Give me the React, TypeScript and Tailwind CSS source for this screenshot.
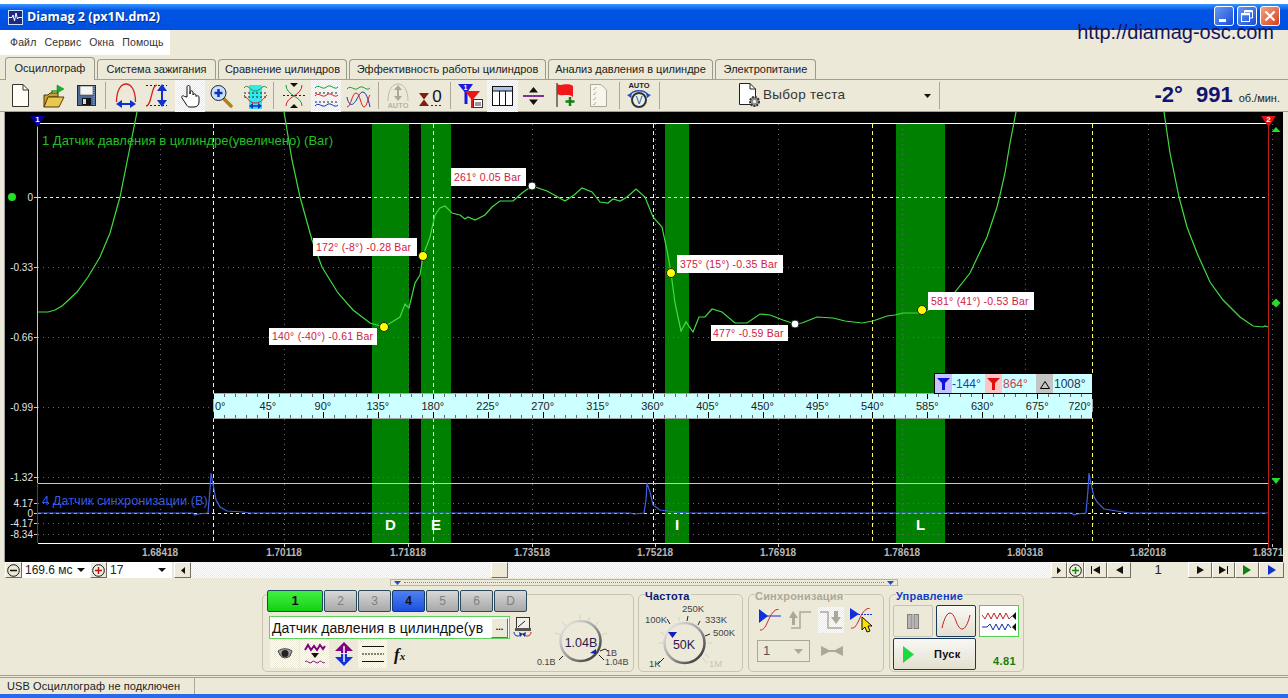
import type { ReactNode } from "react";

const pressure1 = "37.5,312 48,312 55,310 62,306 77,292 88,277 100,257 110,233 120,197 130,147 137,112";
const pressure2 =
  "284,112 292,160 300,197 312,240 322,267 338,293 353,310 370,323 384,327 392,322 400,317 405,304 409,308 415,283 420,275 423,256 430,237 435,215 440,208 445,206 452,213 460,215 465,219 468,217 475,220 485,215 492,207 500,201 513,201 522,193 532,186 547,191 556,196 565,201 574,195 582,188 592,192 600,202 608,203 613,199 620,201 627,197 636,189 645,197 653,217 662,227 667,250 671,273 675,303 681,331 686,322 693,332 699,317 705,317 712,309 722,312 735,323 747,323 760,314 770,315 783,320 795,324 802,323 817,317 833,318 845,321 862,323 873,321 887,316 895,315 903,313 922,313 933,308 955,292 970,273 987,237 997,207 1000,195 1005,173 1010,143 1016,112";
const pressure3 = "1164,112 1170,153 1179,197 1187,227 1197,253 1210,282 1223,300 1240,317 1253,326 1263,327 1265,326 1268,327";
const sync =
  "38,513 193,513 195,515 198,514 208,513 210,490 211,473 213,484 216,500 220,507 227,511 243,512 250,513 630,513 634,514 644,513 646,500 647,483 650,492 653,505 660,510 675,512 690,513 1072,513 1074,515 1077,514 1086,513 1088,490 1089,473 1091,484 1094,497 1097,502 1104,509 1123,512 1130,513 1268,513";

const bands = [
  { x: 372, w: 37, label: "D" },
  { x: 421, w: 30, label: "E" },
  { x: 665, w: 24, label: "I" },
  { x: 896, w: 49, label: "L" },
];
const gridX = [160, 284, 408, 532, 655, 778, 902, 1025, 1148, 1272];
const timeLabels = [
  [160, "1.68418"], [284, "1.70118"], [408, "1.71818"], [532, "1.73518"], [655, "1.75218"],
  [778, "1.76918"], [902, "1.78618"], [1025, "1.80318"], [1148, "1.82018"], [1268, "1.8371"],
] as const;
const yLabels = [
  [197, "0"], [267, "-0.33"], [337, "-0.66"], [407, "-0.99"], [477, "-1.32"],
  [503, "4.17"], [513, "0"], [523, "-4.17"], [534, "-8.34"],
] as const;
const notes = [
  { x: 269, y: 328, w: 108, h: 17, tx: 272, t: "140° (-40°) -0.61 Bar" },
  { x: 313, y: 238, w: 104, h: 18, tx: 316, t: "172° (-8°) -0.28 Bar" },
  { x: 451, y: 168, w: 75, h: 18, tx: 454, t: "261° 0.05 Bar" },
  { x: 677, y: 255, w: 106, h: 18, tx: 680, t: "375° (15°) -0.35 Bar" },
  { x: 711, y: 325, w: 77, h: 16, tx: 713, t: "477° -0.59 Bar" },
  { x: 928, y: 292, w: 106, h: 18, tx: 931, t: "581° (41°) -0.53 Bar" },
];
const degrees = [45, 90, 135, 180, 225, 270, 315, 360, 405, 450, 495, 540, 585, 630, 675];

function Scope() {
  const ticks: number[] = [];
  for (let i = 0; i <= 80; i++) ticks.push(213 + i * 10.99);
  return (
    <svg width="1278" height="450" viewBox="5 112 1278 450" className="block">
      <rect x="5" y="112" width="1278" height="450" fill="#000" />
      {bands.map((b) => (
        <rect key={b.x} x={b.x} y="124" width={b.w} height="419" fill="#008000" />
      ))}
      <g shapeRendering="crispEdges">
        {gridX.map((x) => (
          <line key={x} x1={x + 0.5} x2={x + 0.5} y1="124" y2="543" stroke="#6a6a6a" strokeDasharray="1 4" />
        ))}
        {[267, 337, 407, 477, 503, 523, 534].map((y) => (
          <line key={y} x1="38" x2="1268" y1={y + 0.5} y2={y + 0.5} stroke="#6a6a6a" strokeDasharray="1 4" />
        ))}
        <line x1="38" x2="1268" y1="197.5" y2="197.5" stroke="#e8e8e8" strokeDasharray="3 3" />
        <line x1="38" x2="1268" y1="513.5" y2="513.5" stroke="#e8e8e8" strokeDasharray="3 3" />
        {[213, 433, 653, 872, 1092].map((x) => (
          <line key={x} x1={x + 0.5} x2={x + 0.5} y1="124" y2="543" stroke="#ffff66" strokeDasharray="4 3" />
        ))}
        <line x1="38" x2="1268" y1="123.5" y2="123.5" stroke="#fff" />
        <line x1="38" x2="1268" y1="483.5" y2="483.5" stroke="#c8c8c8" />
        <line x1="38" x2="1268" y1="543.5" y2="543.5" stroke="#fff" />
        <line x1="37.5" x2="37.5" y1="123" y2="483" stroke="#c8c8c8" />
        <line x1="37.5" x2="37.5" y1="483" y2="543" stroke="#2040c8" />
        <line x1="1268.5" x2="1268.5" y1="122" y2="550" stroke="#c02020" />
        {gridX.map((x) => (
          <line key={x} x1={x + 0.5} x2={x + 0.5} y1="544" y2="547" stroke="#c8c8c8" />
        ))}
        {yLabels.map(([y]) => (
          <line key={y} x1="34" x2="37" y1={y + 0.5} y2={y + 0.5} stroke="#c8c8c8" />
        ))}
      </g>

      <polyline points={pressure1} fill="none" stroke="#40dc40" strokeWidth="1.2" />
      <polyline points={pressure2} fill="none" stroke="#40dc40" strokeWidth="1.2" />
      <polyline points={pressure3} fill="none" stroke="#40dc40" strokeWidth="1.2" />
      <polyline points={sync} fill="none" stroke="#3f60e0" strokeWidth="1.2" />

      {yLabels.map(([y, t]) => (
        <text key={y} x="33" y={y + 3.5} textAnchor="end" fontSize="10" fill="#e4e4e4">{t}</text>
      ))}
      {timeLabels.map(([x, t]) => (
        <text key={x} x={x} y="556" textAnchor="middle" fontSize="10" fontWeight="700" fill="#b8b8b8">{t}</text>
      ))}
      <text x="42" y="145" fontSize="13" fill="#22c022">1 Датчик давления в цилиндре(увеличено) (Bar)</text>
      <text x="42" y="505" fontSize="12.800" fill="#3a58dc">4 Датчик синхронизации (В)</text>
      {bands.map((b) => (
        <text key={b.label} x={b.x + b.w / 2} y="530" textAnchor="middle" fontSize="15" fontWeight="700" fill="#fff">{b.label}</text>
      ))}

      {/* угловая шкала */}
      <rect x="213" y="393" width="879" height="25" fill="#ccffff" stroke="#a8a8a8" shapeRendering="crispEdges" />
      <g shapeRendering="crispEdges">
        {ticks.map((x, i) => (
          <g key={i} stroke={i % 5 === 0 ? "#000" : "#666"}>
            <line x1={Math.round(x) + 0.5} x2={Math.round(x) + 0.5} y1="394" y2={i % 5 === 0 ? 399 : 397} />
            <line x1={Math.round(x) + 0.5} x2={Math.round(x) + 0.5} y1={i % 5 === 0 ? 412 : 415} y2="418" />
          </g>
        ))}
      </g>
      <text x="215" y="410" fontSize="11" fill="#222">0°</text>
      {degrees.map((d) => (
        <text key={d} x={213 + (d / 45) * 54.95} y="410" textAnchor="middle" fontSize="11" fill="#222">{d}°</text>
      ))}
      <text x="1091" y="410" textAnchor="end" fontSize="11" fill="#222">720°</text>

      {/* блок фильтра */}
      <rect x="934.5" y="373.5" width="158" height="20" fill="#ccffff" stroke="#000" shapeRendering="crispEdges" />
      <rect x="935" y="374" width="17" height="19" fill="#c4c4ff" />
      <rect x="985" y="374" width="17" height="19" fill="#ffc4c4" />
      <rect x="1036" y="374" width="17" height="19" fill="#c4c4c4" />
      <path d="M937 378H950L945 383V390H942V383Z" fill="#1010e0" />
      <path d="M987 378H1000L995 383V390H992V383Z" fill="#e01010" />
      <path d="M1040.5 388.5H1049.5L1045 381.5Z" fill="none" stroke="#000" />
      <text x="952" y="388" fontSize="12" fill="#2040c0">-144°</text>
      <text x="1003" y="388" fontSize="12" fill="#c84050">864°</text>
      <text x="1054" y="388" fontSize="12" fill="#203060">1008°</text>

      {notes.map((n) => (
        <g key={n.t}>
          <rect x={n.x} y={n.y} width={n.w} height={n.h} fill="#fff" />
          <text x={n.tx} y={n.y + n.h / 2 + 3.5} fontSize="10.500" letterSpacing="0.2" fill="#d0203c">{n.t}</text>
        </g>
      ))}
      {[[384, 327], [423, 256], [671, 273], [922, 310]].map(([x, y]) => (
        <circle key={x} cx={x} cy={y} r="4.500" fill="#ffff00" stroke="#222" />
      ))}
      {[[532, 186], [795, 324]].map(([x, y]) => (
        <circle key={x} cx={x} cy={y} r="4" fill="#fff" stroke="#222" />
      ))}

      <circle cx="12" cy="197" r="4" fill="#22e022" />
      <path d="M1276 127L1280.500 132H1271.500Z" fill="#22e022" />
      <path d="M1276 307.500L1271.500 303L1276 298.500L1280.500 303Z" fill="#22e022" />
      <path d="M1271.500 478H1280.500L1276 484Z" fill="#22e022" />
      <path d="M30 116H45L37.500 127Z" fill="#0000a0" />
      <text x="37.500" y="122" textAnchor="middle" fontSize="8" fontWeight="700" fill="#fff">1</text>
      <path d="M1261 116H1276L1268.500 127Z" fill="#e01010" />
      <text x="1268.500" y="122" textAnchor="middle" fontSize="8" fontWeight="700" fill="#fff">2</text>
    </svg>
  );
}

function Sep({ className }: { className: string }) {
  return <div className={`h-[27px] w-[2px] border-l border-[#aca899] border-r-white ${className}`} />;
}

function Pressed({ className, children }: { className: string; children: ReactNode }) {
  return (
    <div className={`flex h-[32px] items-center justify-center bg-[repeating-conic-gradient(#ffffff_0%_25%,#ece9d8_0%_50%)] bg-size-[2px_2px] ${className}`}>
      {children}
    </div>
  );
}

function NewIcon() {
  return (
    <svg width="17" height="23" viewBox="0 0 17 23" className="ml-[12px]">
      <path d="M.5 .5H11L16.500 6V22.500H.5Z" fill="#fffdf4" stroke="#333" />
      <path d="M11 .5V6H16.500" fill="none" stroke="#333" />
    </svg>
  );
}
function OpenIcon() {
  return (
    <svg width="22" height="24" viewBox="0 0 22 24" className="ml-[14px]">
      <path d="M14 1L21 5L14 9Z" fill="#18b030" stroke="#0a7a1a" strokeWidth=".5" />
      <path d="M15 9V7H9V11" fill="none" stroke="#18a030" strokeWidth="1.500" />
      <path d="M1 23V11H5L7 9H15V13H6Z" fill="#c8a030" stroke="#503a08" />
      <path d="M1 23L5 13H21L16 23Z" fill="#e8c850" stroke="#503a08" />
    </svg>
  );
}
function SaveIcon() {
  return (
    <svg width="19" height="21" viewBox="0 0 19 21" className="ml-[12px]">
      <rect x=".5" y=".5" width="18" height="20" fill="#4a6a9a" stroke="#1a2a50" />
      <rect x="3" y="1" width="13" height="9" fill="#f4f4f4" stroke="#333" strokeWidth=".5" />
      <rect x="5" y="13" width="9" height="7" fill="#111" />
      <rect x="6" y="14" width="3" height="5" fill="#ddd" />
      <path d="M17 1V20" stroke="#9ab0d8" strokeDasharray="1 1" />
    </svg>
  );
}
function SpanXIcon() {
  return (
    <svg width="22" height="25" viewBox="0 0 22 25" className="ml-[8px]">
      <path d="M1.500 19C1.500 7 6 1 11 1C16 1 20.500 7 20.500 19" fill="none" stroke="#d02020" strokeWidth="1.300" />
      <path d="M6 21H16" stroke="#1030d0" strokeWidth="2" />
      <path d="M1 21L7 17V25ZM21 21L15 17V25Z" fill="#1030d0" />
    </svg>
  );
}
function SpanYIcon() {
  return (
    <svg width="23" height="25" viewBox="0 0 23 25" className="ml-[8px]">
      <path d="M1 2.500H22M1 22.500H22" stroke="#222" strokeDasharray="2 2" />
      <path d="M1 23C7 23 6 2 12 2" fill="none" stroke="#d02020" strokeWidth="1.200" />
      <path d="M17 6V19" stroke="#1030d0" strokeWidth="2" />
      <path d="M17 1L22 8H12ZM17 24L22 17H12Z" fill="#1030d0" />
    </svg>
  );
}
function HandIcon() {
  return (
    <svg width="21" height="24" viewBox="0 0 21 24">
      <path
        d="M7 13V3C7 1 10 1 10 3V10V8C10 6.500 13 6.500 13 8V11C13 9.500 16 9.500 16 11V12.500C16 11.500 19 11.500 19 13V18C19 21 17 23 14 23H10C8 23 7 22 6 20L2 14C1 12 3 11 4.500 12.500Z"
        fill="#fff"
        stroke="#111"
      />
    </svg>
  );
}
function MagnifierIcon() {
  return (
    <svg width="23" height="24" viewBox="0 0 23 24" className="ml-[5px]">
      <path d="M13 14L21 22" stroke="#b08020" strokeWidth="3.500" strokeLinecap="round" />
      <circle cx="8.500" cy="9" r="7.500" fill="#c8e0ff" stroke="#222" />
      <path d="M4.500 9H12.500M8.500 5V13" stroke="#1030c0" strokeWidth="2.500" />
    </svg>
  );
}
function CyanIcon() {
  return (
    <svg width="25" height="27" viewBox="0 0 25 27" className="ml-[10px]">
      <rect x="6" y="3" width="13" height="24" fill="#30e8f0" />
      <path d="M1 6C5 1 7 9 12.500 9C18 9 20 1 24 6" fill="none" stroke="#10a030" />
      <path d="M1 11H24M1 15H24" stroke="#222" strokeDasharray="2 2" />
      <path d="M1 13C5 17 7 21 12.500 21C18 21 20 17 24 13" fill="none" stroke="#d02020" />
      <path d="M8 24H17" stroke="#1030d0" strokeWidth="1.500" />
      <path d="M6 24L10 21V27ZM19 24L15 21V27Z" fill="#1030d0" />
    </svg>
  );
}
function CrossIcon() {
  return (
    <svg width="24" height="27" viewBox="0 0 24 27" className="ml-[7px]">
      <path d="M1 13.500H23" stroke="#222" strokeDasharray="2 2" />
      <path d="M4 3C4 14 20 14 20 24" fill="none" stroke="#10a030" />
      <path d="M20 3C20 14 4 14 4 24" fill="none" stroke="#d02020" />
      <path d="M8 1H16L12 5ZM8 26H16L12 22Z" fill="#111" />
    </svg>
  );
}
function StackIcon() {
  return (
    <svg width="25" height="25" viewBox="0 0 25 25">
      <path d="M1 5C5 0 8 8 12.500 4C17 0 20 8 24 4" fill="none" stroke="#10a030" />
      <path d="M1 10H24M1 19H24" stroke="#222" strokeDasharray="2 2" />
      <path d="M1 13C5 8 8 16 12.500 12C17 8 20 16 24 12" fill="none" stroke="#d02020" />
      <path d="M1 23C5 18 8 26 12.500 22C17 18 20 26 24 22" fill="none" stroke="#1030c0" />
    </svg>
  );
}
function OverlayIcon() {
  return (
    <svg width="25" height="26" viewBox="0 0 25 26" className="ml-[5px]">
      <path d="M1 6C5 1 8 9 12.500 5C17 1 20 9 24 5" fill="none" stroke="#10a030" />
      <path d="M1 14C3 24 7 24 12 14C17 4 21 10 24 24" fill="none" stroke="#1030c0" />
      <path d="M1 24C5 24 6 10 10 10C14 10 15 24 18 24C21 24 22 14 24 12" fill="none" stroke="#d02020" />
    </svg>
  );
}
function AutoIcon() {
  return (
    <svg width="22" height="27" viewBox="0 0 22 27" className="ml-[7px]">
      <path d="M1 19C1 8 5 2 11 2C17 2 21 8 21 19" fill="none" stroke="#c0bcae" />
      <path d="M11 6V16" stroke="#aca899" strokeWidth="2" />
      <path d="M11 3L15 8H7ZM11 19L15 14H7Z" fill="#aca899" />
      <text x="11" y="26" textAnchor="middle" fontSize="7.500" fontWeight="700" fill="#b8b4a4">AUTO</text>
    </svg>
  );
}
function ZeroIcon() {
  return (
    <svg width="24" height="24" viewBox="0 0 24 24" className="ml-[10px]">
      <path d="M0 9H10L5 15.500ZM0 22H10L5 15.500Z" fill="#802010" />
      <path d="M12 21.500H24" stroke="#333" strokeDasharray="2 2" />
      <text x="18" y="18" textAnchor="middle" fontSize="17" fill="#111">0</text>
    </svg>
  );
}
function FilterIcon() {
  return (
    <svg width="25" height="26" viewBox="0 0 25 26" className="ml-[6px]">
      <path d="M0 1H15L9.500 9V21H6.500V9Z" fill="#1818e0" />
      <path d="M7 8H22L15.500 16V25H13V16Z" fill="#e81818" />
      <text x="7.500" y="7" textAnchor="middle" fontSize="7" fontWeight="700" fill="#fff">1</text>
      <rect x="15.500" y="16.500" width="9" height="8" fill="#fff" stroke="#333" />
      <path d="M18 19V23M20 19V23M22 19V23" stroke="#333" />
    </svg>
  );
}
function TableIcon() {
  return (
    <svg width="21" height="20" viewBox="0 0 21 20">
      <rect x=".5" y=".5" width="20" height="19" fill="#fff" stroke="#111" />
      <rect x="1" y="1" width="19" height="4" fill="#a8c4e8" />
      <path d="M.5 5H20.500M7.500 5V19M13.500 5V19" stroke="#111" />
    </svg>
  );
}
function DivideIcon() {
  return (
    <svg width="21" height="20" viewBox="0 0 21 20" className="ml-[5px]">
      <path d="M0 10H21" stroke="#803090" strokeWidth="2" />
      <path d="M10.500 1L15 6.500H6ZM10.500 19L15 13.500H6Z" fill="#111" />
    </svg>
  );
}
function FlagIcon() {
  return (
    <svg width="20" height="25" viewBox="0 0 20 25" className="ml-[12px]">
      <path d="M1 0V24" stroke="#111" />
      <path d="M1 1C5 4 10 -1 17 3V14C12 10 6 14 1 11Z" fill="#f01818" />
      <path d="M14 14V23M9.500 18.500H18.500" stroke="#108010" strokeWidth="2.500" />
    </svg>
  );
}
function ChecklistIcon() {
  return (
    <svg width="17" height="23" viewBox="0 0 17 23" className="ml-[14px]">
      <path d="M.5 .5H11L16.500 6V22.500H.5Z" fill="#f8f6ec" stroke="#aca899" />
      <path d="M3 5L4 6L6 3M3 10L4 11L6 8M3 15L4 16L6 13M3 20L4 21L6 18" fill="none" stroke="#b8b8a8" />
    </svg>
  );
}
function AutoVoltIcon() {
  return (
    <svg width="24" height="29" viewBox="0 0 24 29" className="ml-[6px]">
      <text x="12" y="7" textAnchor="middle" fontSize="7.500" fontWeight="700" fill="#222">AUTO</text>
      <path d="M2 15C6 8 18 8 22 15" fill="none" stroke="#2050c0" strokeWidth="1.300" />
      <path d="M0 14L5 12L4 17ZM24 14L19 12L20 17Z" fill="#2050c0" />
      <circle cx="12" cy="19" r="7" fill="#f0f0e0" stroke="#333" strokeWidth="2" />
      <text x="12" y="23" textAnchor="middle" fontSize="10" fill="#2050c0">V</text>
    </svg>
  );
}
function TestIcon() {
  return (
    <svg width="22" height="25" viewBox="0 0 22 25" className="ml-[78px]">
      <path d="M.5 .5H11L16.500 6V21.500H.5Z" fill="#fff" stroke="#222" />
      <path d="M11 .5V6H16.500" fill="none" stroke="#222" />
      <circle cx="15.500" cy="18.500" r="4.500" fill="#909090" stroke="#333" strokeDasharray="2 1" strokeWidth="2" />
      <circle cx="15.500" cy="18.500" r="1.500" fill="#fff" />
    </svg>
  );
}

function Toolbar() {
  return (
    <div className="flex h-[33px] items-center border-y border-[#a0a0a0] bg-[#ece9d8]">
      <NewIcon />
      <OpenIcon />
      <SaveIcon />
      <Sep className="ml-[9px]" />
      <SpanXIcon />
      <SpanYIcon />
      <Pressed className="ml-[7px] w-[30px]"><HandIcon /></Pressed>
      <MagnifierIcon />
      <CyanIcon />
      <Sep className="ml-[5px]" />
      <CrossIcon />
      <Pressed className="ml-[5px] w-[30px]"><StackIcon /></Pressed>
      <OverlayIcon />
      <Sep className="ml-[7px]" />
      <AutoIcon />
      <ZeroIcon />
      <Sep className="ml-[7px]" />
      <FilterIcon />
      <Pressed className="ml-[4px] w-[31px]"><TableIcon /></Pressed>
      <DivideIcon />
      <FlagIcon />
      <ChecklistIcon />
      <Sep className="ml-[12px]" />
      <AutoVoltIcon />
      <Sep className="ml-[8px]" />
      <TestIcon />
      <span className="ml-[2px] w-[161px] text-[13.5px] tracking-[0.3px] text-[#333]">Выбор теста</span>
      <svg width="7" height="4" viewBox="0 0 7 4"><path d="M0 0H7L3.500 4Z" fill="#111" /></svg>
      <Sep className="ml-[8px]" />
      <div className="ml-auto flex items-baseline pr-[8px] text-[#14146e]">
        <span className="text-[22px] font-bold leading-none">-2°</span>
        <span className="ml-[13px] text-[22px] font-bold leading-none">991</span>
        <span className="ml-[6px] text-[11px] text-[#222]">об./мин.</span>
      </div>
    </div>
  );
}

const tabs = [
  { t: "Система зажигания", w: "w-[119px]" },
  { t: "Сравнение цилиндров", w: "w-[129px]" },
  { t: "Эффективность работы цилиндров", w: "w-[197px]" },
  { t: "Анализ давления в цилиндре", w: "w-[165px]" },
  { t: "Электропитание", w: "w-[101px]" },
];

function Tabs() {
  return (
    <div className="flex h-[24px] items-end gap-[2px] pl-[5px] text-[11px] text-[#222]">
      <div className="z-10 -mb-px flex h-[23px] w-[90px] items-center justify-center rounded-t-[4px] border border-b-0 border-[#9a9a8a] bg-[#ece9d8] pb-[2px]">Осциллограф</div>
      {tabs.map((tab) => (
        <div key={tab.t} className={`flex h-[20px] items-center justify-center rounded-t-[4px] border border-b-0 border-[#9a9a8a] bg-[#ece9d8] ${tab.w}`}>{tab.t}</div>
      ))}
    </div>
  );
}

function Raised({ className, children }: { className: string; children?: ReactNode }) {
  return (
    <div className={`flex h-[16px] items-center justify-center border border-[#fff] border-r-[#716f64] border-b-[#716f64] bg-[#ece9d8] ${className}`}>
      {children}
    </div>
  );
}

function Tri({ dir, fill = "#111" }: { dir: "l" | "r"; fill?: string }) {
  return (
    <svg width="8" height="10" viewBox="0 0 8 10">
      <path d={dir === "l" ? "M8 0V10L0 5Z" : "M0 0V10L8 5Z"} fill={fill} />
    </svg>
  );
}

function RoundBtn({ plus }: { plus?: boolean }) {
  return (
    <svg width="13" height="13" viewBox="0 0 13 13">
      <circle cx="6.500" cy="6.500" r="5.800" fill={plus ? "#f4f0e0" : "#ece9d8"} stroke="#111" />
      <path d="M3 6.500H10" stroke={plus === undefined ? "#111" : "#108010"} strokeWidth="1.500" />
      {plus && <path d="M6.500 3V10" stroke="#108010" strokeWidth="1.500" />}
    </svg>
  );
}

function DownArrow() {
  return (
    <svg width="8" height="4" viewBox="0 0 8 4"><path d="M0 0H8L4 4Z" fill="#111" /></svg>
  );
}

function TimeBar() {
  return (
    <div className="flex h-[16px] items-center text-[12px] text-[#222]">
      <Raised className="ml-[5px] w-[17px]"><RoundBtn /></Raised>
      <div className="flex h-[16px] w-[68px] items-center justify-between bg-white pl-[3px] pr-[5px]">
        <span>169.6 мс</span><DownArrow />
      </div>
      <Raised className="w-[17px]">
        <svg width="13" height="13" viewBox="0 0 13 13">
          <circle cx="6.500" cy="6.500" r="5.800" fill="#f4f0e0" stroke="#111" />
          <path d="M3 6.500H10M6.500 3V10" stroke="#c01010" strokeWidth="1.500" />
        </svg>
      </Raised>
      <div className="flex h-[16px] w-[65px] items-center justify-between bg-white pl-[3px] pr-[6px]">
        <span>17</span><DownArrow />
      </div>
      <Raised className="ml-[2px] w-[17px]"><svg width="4" height="7" viewBox="0 0 4 7"><path d="M4 0V7L0 3.500Z" fill="#111" /></svg></Raised>
      <div className="flex h-[16px] w-[860px] items-center bg-[repeating-conic-gradient(#ffffff_0%_25%,#ece9d8_0%_50%)] bg-size-[2px_2px] pl-[300px]">
        <Raised className="w-[17px]" />
      </div>
      <Raised className="w-[16px]"><svg width="4" height="7" viewBox="0 0 4 7"><path d="M0 0V7L4 3.500Z" fill="#111" /></svg></Raised>
      <Raised className="w-[17px]"><RoundBtn plus /></Raised>
      <Raised className="w-[23px]">
        <svg width="9" height="8" viewBox="0 0 9 8"><path d="M.5 0V8" stroke="#111" /><path d="M9 0V8L2 4Z" fill="#111" /></svg>
      </Raised>
      <Raised className="w-[24px]"><svg width="7" height="8" viewBox="0 0 7 8"><path d="M7 0V8L0 4Z" fill="#111" /></svg></Raised>
      <div className="w-[57px] pr-[3px] text-center text-[13px]">1</div>
      <Raised className="w-[24px]"><svg width="7" height="8" viewBox="0 0 7 8"><path d="M0 0V8L7 4Z" fill="#111" /></svg></Raised>
      <Raised className="w-[23px]">
        <svg width="9" height="8" viewBox="0 0 9 8"><path d="M8.500 0V8" stroke="#111" /><path d="M0 0V8L7 4Z" fill="#111" /></svg>
      </Raised>
      <Raised className="w-[24px]"><Tri dir="r" fill="#108010" /></Raised>
      <Raised className="w-[25px]"><Tri dir="r" fill="#1030d0" /></Raised>
    </div>
  );
}

function Splitter() {
  return (
    <div className="mt-px ml-[390px] flex h-[7px] w-[508px] items-center justify-between border border-[#b8b4a4] px-[3px]">
      <svg width="7" height="4" viewBox="0 0 7 4"><path d="M0 0H7L3.500 4Z" fill="#2050c0" /></svg>
      <div className="mx-[3px] h-px flex-1 border-t border-dotted border-[#888]" />
      <svg width="7" height="4" viewBox="0 0 7 4"><path d="M0 0H7L3.500 4Z" fill="#2050c0" /></svg>
    </div>
  );
}

function VoltKnob() {
  return (
    <svg width="104" height="78" viewBox="530 594 104 78">
      <defs>
        <linearGradient id="ringA" x1="0" y1="0" x2="1" y2="1">
          <stop offset="0" stopColor="#f4f4f0" />
          <stop offset=".5" stopColor="#a0a0a0" />
          <stop offset="1" stopColor="#222" />
        </linearGradient>
      </defs>
      {[[555, 632, 561, 634], [562, 621, 566, 625], [580, 614, 580, 618], [590, 616, 588, 620], [598, 621, 595, 625], [607, 632, 602, 634]].map(([a, b, c, d]) => (
        <line key={a} x1={a} y1={b} x2={c} y2={d} stroke="#d4d0c0" />
      ))}
      <path d="M559 659L563 655M600 650L605 648L608 650M599 654L604 659" fill="none" stroke="#222" />
      <circle cx="580.500" cy="640" r="20" fill="#ece9d8" stroke="url(#ringA)" strokeWidth="2.500" />
      <path d="M590 652L596 648L596 653Z" fill="#1020c0" />
      <text x="581" y="646" textAnchor="middle" fontSize="12.500" fill="#2a1a50">1.04В</text>
      <text x="537" y="664" fontSize="9" fill="#444">0.1В</text>
      <text x="606" y="655" fontSize="9" fill="#444">1В</text>
      <text x="605" y="664" fontSize="9" fill="#444">1.04В</text>
    </svg>
  );
}

function FreqKnob() {
  return (
    <svg width="105" height="78" viewBox="638 594 105 78">
      <defs>
        <linearGradient id="ringB" x1="0" y1="0" x2="1" y2="1">
          <stop offset="0" stopColor="#f4f4f0" />
          <stop offset=".5" stopColor="#a0a0a0" />
          <stop offset="1" stopColor="#222" />
        </linearGradient>
      </defs>
      <path d="M667 619L670 624M688 616L687 621M700 621L698 625M710 634L705 636M658 664L664 658" fill="none" stroke="#222" />
      {[[663, 643, 659, 643], [664, 634, 660, 632], [679, 617, 679, 621], [708, 643, 712, 643], [705, 654, 709, 657], [702, 658, 707, 663]].map(([a, b, c, d]) => (
        <line key={a + b} x1={a} y1={b} x2={c} y2={d} stroke="#d4d0c0" />
      ))}
      <circle cx="684.500" cy="643" r="20" fill="#ece9d8" stroke="url(#ringB)" strokeWidth="2.500" />
      <path d="M668 632H677L672.500 638Z" fill="#1020c0" />
      <text x="684" y="649" textAnchor="middle" fontSize="12.500" fill="#2a1a50">50K</text>
      <g fontSize="9.500" fill="#444">
        <text x="682" y="612">250K</text>
        <text x="645" y="623">100K</text>
        <text x="705" y="623">333K</text>
        <text x="713" y="636">500K</text>
        <text x="649" y="667">1K</text>
        <text x="709" y="667" fill="#c8c4b4">1M</text>
      </g>
    </svg>
  );
}

const channels = [
  { t: "2", w: "w-[33px]" }, { t: "3", w: "w-[33px]" }, { t: "4", w: "w-[33px]", on: true },
  { t: "5", w: "w-[33px]" }, { t: "6", w: "w-[33px]" }, { t: "D", w: "w-[33px]" },
];

function ChannelGroup() {
  return (
    <div className="flex h-[78px] w-[372px] rounded-[5px] border border-[#c8c4b4]">
      <div className="-mt-[5px] ml-[4px] w-[266px] shrink-0">
        <div className="flex gap-px">
          <div className="flex h-[22px] w-[56px] items-center justify-center rounded-[2px] border border-[#1a4a5c] bg-linear-to-b from-[#40f040] to-[#10d010] text-[13px] font-bold text-[#111]">1</div>
          {channels.map((c) =>
            c.on ? (
              <div key={c.t} className={`flex h-[22px] items-center justify-center rounded-[2px] border border-[#1a3a6c] bg-linear-to-b from-[#5080f0] to-[#1a50e0] text-[12px] font-bold text-[#111] ${c.w}`}>{c.t}</div>
            ) : (
              <div key={c.t} className={`flex h-[22px] items-center justify-center rounded-[2px] border border-[#2a4a5c] bg-linear-to-b from-[#d8d8d8] to-[#a8a8a8] text-[12px] text-[#808080] ${c.w}`}>{c.t}</div>
            ),
          )}
        </div>
        <div className="mt-[4px] flex items-center">
          <div className="ml-[2px] flex h-[23px] w-[241px] items-center justify-between border border-[#60d060] bg-white pl-[2px] pr-[1px]">
            <span className="whitespace-nowrap text-[14px] leading-none tracking-[0.1px] text-[#111]">Датчик давления в цилиндре(ув</span>
            <div className="flex h-[20px] w-[17px] items-center justify-center border border-white border-r-[#716f64] border-b-[#716f64] bg-[#ece9d8] text-[9px] font-bold leading-none">...</div>
          </div>
          <svg width="19" height="21" viewBox="0 0 19 21" className="ml-[3px]">
            <rect x="3.500" y=".5" width="13" height="11" fill="#f0f0e8" stroke="#333" />
            <path d="M5 10L12 4" stroke="#222" />
            <rect x="2" y="11" width="16" height="3" fill="#555" />
            <path d="M1 15C1 20 7 20 8 17" fill="none" stroke="#1030a0" />
            <path d="M18 15C18 20 12 20 11 17" fill="none" stroke="#d02020" />
            <path d="M6 15L10 17L7 20ZM13 15L9 17L12 20Z" fill="#1030a0" />
          </svg>
        </div>
        <div className="mt-[1px] flex h-[28px] items-center pl-[3px]">
          <Pressed className="h-[28px]! w-[29px]">
            <svg width="16" height="12" viewBox="0 0 16 12">
              <path d="M1 3C5 0 11 0 15 3L13 8C9 11 5 10 3 7Z" fill="#a0a0a0" stroke="#444" />
              <circle cx="8" cy="5.500" r="3.500" fill="#222" />
            </svg>
          </Pressed>
          <Pressed className="ml-px h-[28px]! w-[29px]">
            <svg width="22" height="23" viewBox="0 0 22 23">
              <path d="M1 7L4 2L7 7L10 3L13 7L16 2L19 6L21 3" fill="none" stroke="#800080" strokeWidth="2" />
              <path d="M7 10H15L11 15Z" fill="#111" />
              <path d="M1 19C3 16 5 22 8 19C10 16 12 22 15 19C17 16 19 22 21 19" fill="none" stroke="#800080" />
            </svg>
          </Pressed>
          <svg width="18" height="24" viewBox="0 0 18 24" className="ml-[6px]">
            <path d="M9 0L18 9H12V11H6V9H0Z" fill="#800080" />
            <path d="M9 24L18 15H12V12H6V15H0Z" fill="#1030e0" />
            <path d="M9 4V20" stroke="#fff" strokeWidth="1.500" />
          </svg>
          <Pressed className="ml-[5px] h-[28px]! w-[29px]">
            <svg width="22" height="20" viewBox="0 0 22 20">
              <path d="M0 2.500H22M0 17.500H22" stroke="#111" />
              <path d="M0 10H22" stroke="#111" strokeDasharray="2 1" />
            </svg>
          </Pressed>
          <span className="ml-[7px] font-['Liberation_Serif',serif] text-[17px] font-bold italic leading-none text-[#111]">f<span className="text-[11px]">x</span></span>
        </div>
      </div>
      <div className="-ml-[3px]"><VoltKnob /></div>
    </div>
  );
}

function GroupTitle({ className, children }: { className: string; children: ReactNode }) {
  return (
    <div className={`absolute -top-[5px] left-[6px] bg-[#ece9d8] pr-[1px] text-[11px] font-bold leading-[13px] tracking-[0.2px] ${className}`}>{children}</div>
  );
}

function SyncGroup() {
  return (
    <div className="relative ml-[5px] h-[78px] w-[136px] rounded-[5px] border border-[#c8c4b4]">
      <GroupTitle className="text-[#aca899]">Синхронизация</GroupTitle>
      <div className="ml-[10px] mt-[12px] flex h-[26px] items-center">
        <svg width="22" height="22" viewBox="0 0 22 22">
          <path d="M0 0L9 7L0 14Z" fill="#1030e0" />
          <path d="M5 7H22" stroke="#1030e0" />
          <path d="M1 21C9 22 9 1 20 0" fill="none" stroke="#d02020" />
        </svg>
        <svg width="22" height="18" viewBox="0 0 22 18" className="ml-[8px]">
          <path d="M4 0L9 7H6V14H3V7H0Z" fill="#aca899" />
          <path d="M2 17H11V1H22" fill="none" stroke="#aca899" strokeWidth="1.500" />
        </svg>
        <Pressed className="ml-[7px] h-[26px]! w-[26px]">
          <svg width="22" height="18" viewBox="0 0 22 18">
            <path d="M0 1H8V17H22" fill="none" stroke="#aca899" strokeWidth="1.500" />
            <path d="M16 13L11 6H14V0H18V6H21Z" fill="#aca899" />
          </svg>
        </Pressed>
        <svg width="23" height="25" viewBox="0 0 23 25" className="ml-[6px]">
          <path d="M0 0L9 6L0 12Z" fill="#1030e0" />
          <path d="M5 6.500H22" stroke="#1030e0" strokeDasharray="2 1" />
          <path d="M1 20C9 22 9 1 20 0" fill="none" stroke="#d02020" />
          <path d="M12 9V22L15 19L17 24L20 23L18 18H22Z" fill="#ffe000" stroke="#111" />
        </svg>
      </div>
      <div className="ml-[8px] mt-[7px] flex items-center">
        <div className="flex h-[22px] w-[53px] items-center justify-between border border-[#aca899] pl-[5px] pr-[6px] text-[13px] text-[#555]">
          <span>1</span>
          <svg width="9" height="5" viewBox="0 0 9 5"><path d="M0 0H9L4.500 5Z" fill="#aca899" /></svg>
        </div>
        <svg width="22" height="10" viewBox="0 0 22 10" className="ml-[11px]">
          <path d="M0 0L8 4H14L22 0V10L14 6H8L0 10Z" fill="#aca899" />
        </svg>
      </div>
    </div>
  );
}

function ControlGroup() {
  return (
    <div className="relative ml-[5px] h-[78px] w-[135px] rounded-[5px] border border-[#c8c4b4]">
      <GroupTitle className="text-[#1040c0]">Управление</GroupTitle>
      <div className="ml-[3px] mt-[10px] flex gap-[3px]">
        <div className="flex h-[32px] w-[40px] items-center justify-center rounded-[2px] border border-[#c8c4b4]">
          <svg width="12" height="15" viewBox="0 0 12 15">
            <rect x=".5" y=".5" width="4.500" height="14" fill="#b4b4b4" stroke="#808080" />
            <rect x="7" y=".5" width="4.500" height="14" fill="#b4b4b4" stroke="#808080" />
          </svg>
        </div>
        <div className="flex h-[32px] w-[40px] items-center justify-center rounded-[2px] border border-[#1a3a5c] bg-linear-to-b from-[#f8f8f4] to-[#e4e0d0]">
          <svg width="30" height="20" viewBox="0 0 30 20">
            <path d="M1 17C5 -1 11 -2 15 10C19 22 25 21 29 4" fill="none" stroke="#c02020" />
          </svg>
        </div>
        <div className="flex h-[32px] w-[40px] flex-col items-center justify-center gap-[3px] border border-[#50d050] bg-white">
          <svg width="34" height="8" viewBox="0 0 34 8">
            <path d="M0 3L3 7L6 1L9 7L12 1L15 7L18 1L21 7L24 1L27 7L30 4" fill="none" stroke="#c02020" />
            <path d="M34 0V8L30 4Z" fill="#111" />
          </svg>
          <svg width="34" height="8" viewBox="0 0 34 8">
            <path d="M0 4H5L8 1L11 7L14 1L17 7L20 1L23 7L26 1L29 5" fill="none" stroke="#1030a0" />
            <path d="M34 0V8L30 4Z" fill="#111" />
          </svg>
        </div>
      </div>
      <div className="ml-[3px] mt-px flex items-center">
        <div className="flex h-[32px] w-[83px] items-center rounded-[2px] border border-[#1a3a5c] bg-linear-to-b from-[#f8f8f4] to-[#e4e0d0] pl-[9px]">
          <svg width="11" height="17" viewBox="0 0 11 17"><path d="M0 0L11 8.500L0 17Z" fill="#20d840" /></svg>
          <span className="ml-[20px] text-[11px] font-bold tracking-[0.3px] text-[#111]">Пуск</span>
        </div>
        <span className="ml-[17px] mt-[14px] text-[11px] font-bold leading-none tracking-[0.4px] text-[#108010]">4.81</span>
      </div>
    </div>
  );
}

function BottomPanel() {
  return (
    <div className="h-[96px]">
      <Splitter />
      <div className="ml-[262px] mt-[8px] flex">
        <ChannelGroup />
        <div className="relative ml-[4px] h-[78px] w-[105px] rounded-[5px] border border-[#c8c4b4]">
          <GroupTitle className="text-[#0a1a70]">Частота</GroupTitle>
          <div className="-m-px"><FreqKnob /></div>
        </div>
        <SyncGroup />
        <ControlGroup />
      </div>
    </div>
  );
}

export default function App() {
  return (
    <div className="relative h-[698px] w-[1288px] overflow-hidden bg-[#ece9d8] font-['Liberation_Sans',Arial,sans-serif]">
      <div className="h-[4px] bg-white" />
      <div className="flex h-[26px] items-center bg-linear-to-b from-[#3a93ff] via-[#0055e5] via-25% to-[#0050e0] pl-[8px] pr-[8px]">
        <svg width="15" height="15" viewBox="0 0 15 15">
          <rect x=".5" y=".5" width="14" height="14" fill="#1a2a80" stroke="#d0e0ff" />
          <path d="M1 7.500H4L5 5L6.500 11L8 3L9.500 9L10.500 7.500H14" fill="none" stroke="#fff" />
        </svg>
        <span className="ml-[4px] font-['Open_Sans',sans-serif] text-[12.5px] font-bold text-white [text-shadow:1px_1px_#0a2a80]">Diamag 2 (px1N.dm2)</span>
        <div className="ml-auto flex gap-[3px] pb-[2px]">
          <div className="flex h-[20px] w-[20px] items-end rounded-[3px] border border-white bg-linear-to-br from-[#6a96f0] to-[#1a4ad8] pb-[3px] pl-[4px]">
            <div className="h-[3px] w-[7px] bg-white" />
          </div>
          <div className="flex h-[20px] w-[20px] items-center justify-center rounded-[3px] border border-white bg-linear-to-br from-[#6a96f0] to-[#1a4ad8]">
            <svg width="12" height="12" viewBox="0 0 12 12" fill="none" stroke="#fff">
              <path d="M3.500 3V.5H11.500V8H9" strokeWidth="1" />
              <rect x=".5" y="3.500" width="8" height="8" strokeWidth="1" />
              <path d="M.5 4.500H8.500M3.500 1.500H11.500" strokeWidth="1.500" />
            </svg>
          </div>
          <div className="flex h-[20px] w-[20px] items-center justify-center rounded-[3px] border border-white bg-linear-to-br from-[#f0a080] to-[#d83a10]">
            <svg width="12" height="12" viewBox="0 0 12 12">
              <path d="M1.500 1.500L10.500 10.500M10.500 1.500L1.500 10.500" stroke="#fff" strokeWidth="2.200" />
            </svg>
          </div>
        </div>
      </div>
      <div className="absolute right-[14px] top-[21px] text-[20px] leading-[23px] text-[#14145e]">http://diamag-osc.com</div>
      <div className="flex h-[25px] w-[170px] items-center gap-[8px] bg-white pl-[10px] text-[10.5px] tracking-[0.15px] text-[#333]">
        <span>Файл</span>
        <span>Сервис</span>
        <span>Окна</span>
        <span>Помощь</span>
      </div>
      <Tabs />
      <Toolbar />
      <div className="ml-[4px] mr-[5px] border-l border-[#a0a0a0]">
        <Scope />
      </div>
      <TimeBar />
      <BottomPanel />
      <div className="border-y border-[#a0a0a0] pt-px" />
      <div className="flex h-[16px] items-center text-[11px] tracking-[0.1px] text-[#222]">
        <span className="w-[195px] border-r border-[#aca899] pl-[7px]">USB Осциллограф не подключен</span>
      </div>
      <div className="h-[5px] bg-[#2a6ae8]" />
    </div>
  );
}
